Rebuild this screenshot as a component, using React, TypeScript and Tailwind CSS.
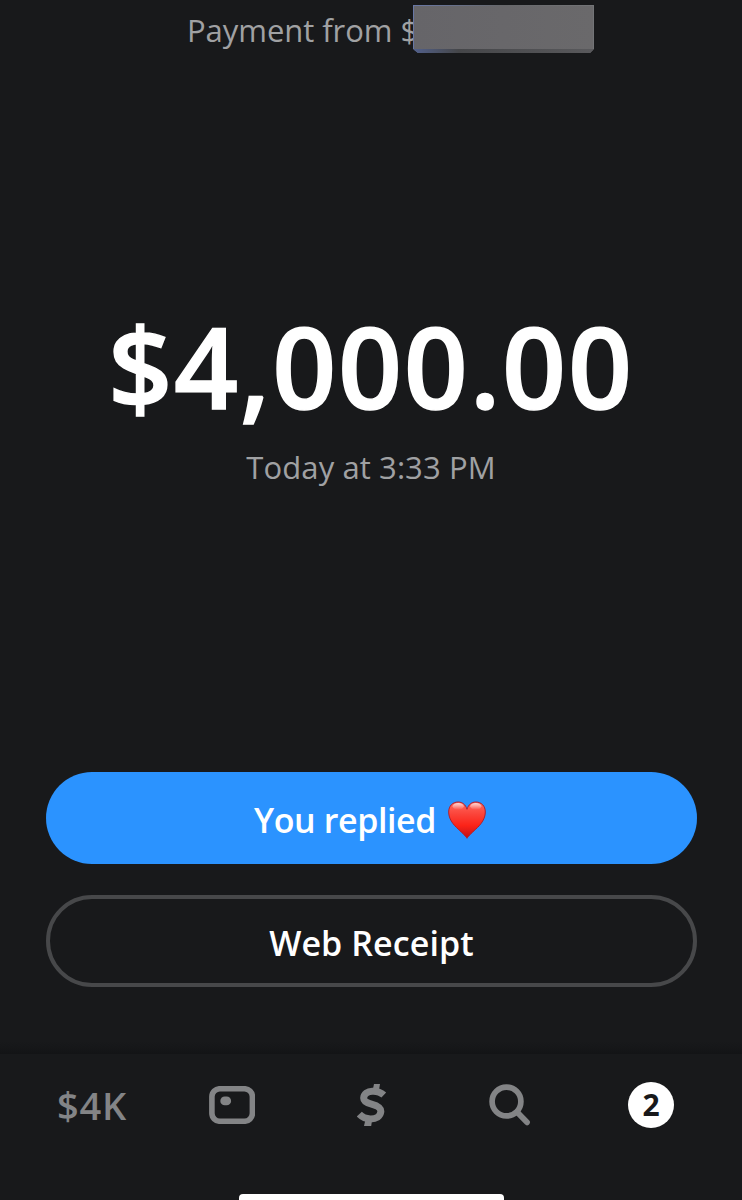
function HeartIcon() {
  return (
    <svg width="38" height="38" viewBox="0 0 38 38" aria-hidden="true">
      <defs>
        <linearGradient id="heart-fill" x1="0" y1="0" x2="0" y2="1">
          <stop offset="0" stopColor="#ff6b60" />
          <stop offset="0.35" stopColor="#fb4238" />
          <stop offset="0.65" stopColor="#fb2318" />
          <stop offset="1" stopColor="#c00f16" />
        </linearGradient>
        <linearGradient id="heart-shine" x1="0" y1="0" x2="0" y2="1">
          <stop offset="0" stopColor="#fff" stopOpacity="0.75" />
          <stop offset="1" stopColor="#fff" stopOpacity="0" />
        </linearGradient>
      </defs>
      <path
        d="M19 37.300C17.600 34.800 13 30.800 8.500 26.500C3.500 21.700 .7 16.500 .7 11C.7 5 4.500 1 10.200 1C14.400 1 17.600 3.600 19 8.300C20.400 3.600 23.600 1 27.800 1C33.500 1 37.300 5 37.300 11C37.300 16.500 34.500 21.700 29.500 26.500C25 30.800 20.400 34.800 19 37.300Z"
        fill="url(#heart-fill)"
        stroke="#b0202c"
        strokeWidth="1"
      />
      <ellipse cx="10.200" cy="5.300" rx="5.600" ry="3.400" fill="url(#heart-shine)" />
      <ellipse cx="27.800" cy="5.300" rx="5.600" ry="3.400" fill="url(#heart-shine)" />
    </svg>
  );
}

function CardIcon() {
  return (
    <svg width="46" height="38" viewBox="0 0 46 38" aria-hidden="true">
      <rect x="2.900" y="2.750" width="40.500" height="32.500" rx="8" fill="none" stroke="currentColor" strokeWidth="5.600" />
      <rect x="11.300" y="10.500" width="10.800" height="8.800" rx="4.400" fill="currentColor" />
    </svg>
  );
}

function CashIcon() {
  return (
    <svg width="30" height="42" viewBox="0 0 30 42" fill="none" aria-hidden="true">
      <path
        d="M26.800 11C23.500 8 19.500 7 15.300 7.200C10.500 7.400 7 9.900 6.700 13.700C6.400 17.300 9.500 18.800 14.500 20.100C20.500 21.700 24.200 23.500 23.800 27.800C23.400 32.300 19.200 34.900 13.600 34.900C8.800 34.900 5.200 33.300 2.300 30.200"
        stroke="currentColor"
        strokeWidth="7"
      />
      <path d="M17 0H23L21.800 7H15.500ZM8.600 35H15.200L14.200 42H7Z" fill="currentColor" />
    </svg>
  );
}

function SearchIcon() {
  return (
    <svg width="42" height="42" viewBox="0 0 42 42" fill="none" stroke="currentColor" aria-hidden="true">
      <circle cx="17.500" cy="17.500" r="14.400" strokeWidth="5.700" />
      <path d="M28 28L38 38.300" strokeWidth="5.800" strokeLinecap="round" />
    </svg>
  );
}

function TabBar() {
  return (
    <nav className="flex h-[146px] flex-col justify-between bg-[#18191b] text-[#838486]">
      <div className="flex h-[102px] items-center pl-[57px] pr-[68px]">
        <span className="w-[152px] pb-px text-[38px] font-semibold leading-none tracking-[0.8px]">$4K</span>
        <div className="w-[148px]">
          <CardIcon />
        </div>
        <div className="w-[132px]">
          <CashIcon />
        </div>
        <SearchIcon />
        <span className="ml-auto flex size-[46px] items-center justify-center rounded-full bg-white text-[30px] font-bold leading-none text-[#18191b]">
          2
        </span>
      </div>
      <div className="ml-[239px] h-1.5 w-[265px] rounded-t bg-white" />
    </nav>
  );
}

export default function App() {
  return (
    <div className="flex h-[1200px] w-[742px] flex-col overflow-hidden bg-[#18191b] font-['Open_Sans','Noto_Sans',sans-serif] text-white">
      <header className="flex h-[306px] items-start pl-[187px] text-[31px] leading-[60px] text-[#a0a1a3]">
        <span className="w-[232px] whitespace-nowrap tracking-[-0.05px]">Payment from $</span>
        <div className="relative -ml-1.5 mt-[5px] h-12 w-[181px] shrink-0 bg-linear-to-r from-[#6877a5] via-[#66676a] to-[#737477] p-px [clip-path:polygon(0_0,100%_0,100%_44px,177px_100%,5px_100%,0_44px)]">
          <div className="h-[43px] bg-linear-to-r from-[#666569] to-[#6a696b]" />
          <div className="h-1 bg-linear-to-r from-[#52608b] via-[#454649] via-25% to-[#59595c]" />
        </div>
      </header>

      <main className="flex flex-col items-center">
        <h1 className="whitespace-nowrap text-[112px] font-semibold leading-[120px] tracking-[1.8px] [-webkit-text-stroke:1.500px_white] [stroke-linejoin:round]">
          $4,000.00
        </h1>
        <p className="mt-[21px] text-[31px] leading-10 tracking-[0.1px] text-[#a0a1a3]">Today at 3:33 PM</p>
        <div className="ml-px mt-[285px] flex w-[651px] flex-col gap-[31px] text-[34px] font-semibold">
          <button className="flex h-[92px] items-center justify-center gap-3 rounded-full bg-[#2b93ff] pr-[3px] pt-1">
            <span className="tracking-[-0.4px]">You replied</span>
            <HeartIcon />
          </button>
          <button className="h-[92px] rounded-full border-4 border-[#47484a] pt-1 tracking-[0.1px]">Web Receipt</button>
        </div>
      </main>

      <div className="mt-[55px] h-3 bg-linear-to-b from-[#18191b] to-[#131416]" />
      <TabBar />
    </div>
  );
}
